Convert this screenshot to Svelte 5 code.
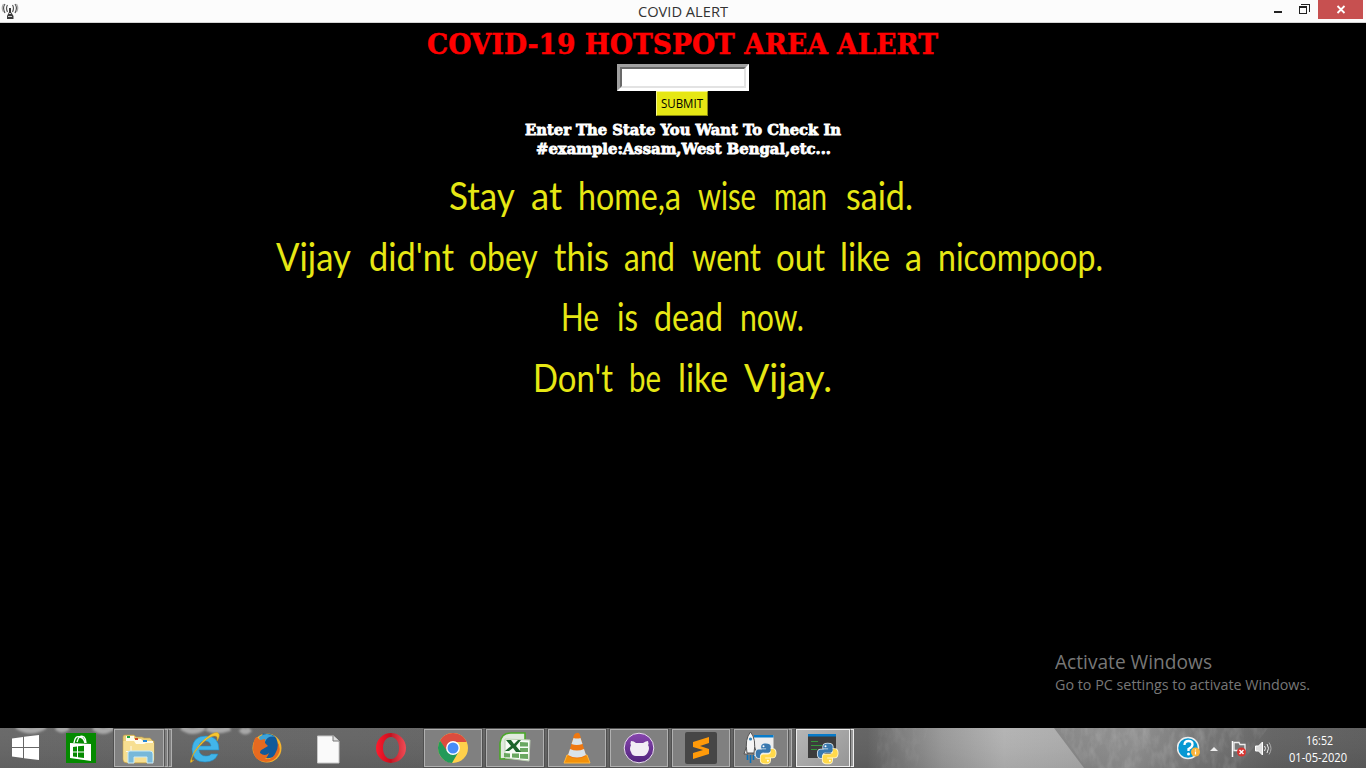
<script>
  // Each word: text, left edge, drawn width
  const verses = [
    [['Stay', 449, 65], ['at', 531, 31], ['home,a', 578, 103], ['wise', 698, 58], ['man', 774, 53], ['said.', 846, 67]],
    [['Vijay', 276, 74], ["did'nt", 369, 85], ['obey', 469, 68], ['this', 554, 55], ['and', 624, 51], ['went', 692, 69], ['out', 776, 49], ['like', 840, 50], ['a', 905, 17], ['nicompoop.', 938, 165]],
    [['He', 561, 38], ['is', 617, 21], ['dead', 654, 69], ['now.', 740, 64]],
    [["Don't", 533, 80], ['be', 629, 32], ['like', 678, 50], ['Vijay.', 744, 88]]
  ];
  const apps = [
    { id: 'store' }, { id: 'files', open: true, stack: 2 }, { id: 'ie' }, { id: 'firefox' },
    { id: 'doc' }, { id: 'opera' }, { id: 'chrome', open: true }, { id: 'excel', open: true },
    { id: 'vlc', open: true }, { id: 'github', open: true }, { id: 'sublime', open: true },
    { id: 'rocket', open: true, stack: 1 }, { id: 'idle', open: true, stack: 1, active: true }
  ];
  const snake = 'M10 0C7 0 5.500 1 5.500 3V5H10.500V6H3C1 6 0 7.500 0 10.200S1.200 14.500 3 14.500H4.800V12C4.800 10 6 9 8 9H12.500C14 9 15 8 15 6.500V3C15 1 13 0 10 0z';
</script>

{#snippet python()}
  <g transform="translate(21.700 15.500)">
    <path d={snake} fill="#3978ae" stroke="#e4ecf0" stroke-width="1.600" paint-order="stroke" />
    <path d={snake} transform="rotate(180 10 10)" fill="#ffd94b" stroke="#fff6d0" stroke-width="1.600" paint-order="stroke" />
    <path d="M8 9h4.500C14 9 15 8 15 6.500V5l-4.500 0V6H6z" fill="#3978ae" />
    <circle cx="7.800" cy="2.700" r="1" fill="#fff" /><circle cx="12.200" cy="17.300" r="1" fill="#fff" />
  </g>
{/snippet}

<div class="screen">
  <header>
    <svg class="antenna" width="18" height="18" viewBox="0 0 18 18" fill="none">
      <g stroke="#555" stroke-width="1.200"><path d="M4 3Q1 7 4 12M6.500 4Q4.500 7 6.500 11M14 3q3 4 0 9M11.500 4q2 3 0 7" /><path d="M2.500 3Q0 7 2.500 11M15.500 3q2.500 4 0 8" stroke="#aaa" /></g>
      <path d="M8 7h2v4l2.500 4v3h-6.500v-3L8 11z" fill="#3b3b3b" /><path d="M8 12.500h2M7 15.500h4" stroke="#ccc" />
    </svg>
    <svg class="caption" width="120" height="22"><text x="15" y="17" textLength="90" lengthAdjust="spacingAndGlyphs">COVID ALERT</text></svg>
    <div class="controls">
      <svg width="44" height="19" viewBox="0 0 44 19" shape-rendering="crispEdges"><path d="M0 11h8v2H0z" fill="#222" /><path d="M25.500 6.500h7v7h-7zM25 7.500h8M27 4.500h8.500V12" fill="none" stroke="#222" /></svg>
      <svg class="close" width="45" height="19"><path d="m19.500 6 7 7m0-7-7 7" stroke="#fff" stroke-width="1.800" /></svg>
    </div>
  </header>

  <main>
    <svg class="title" width="1366" height="41"><text x="427" y="31" textLength="511" lengthAdjust="spacingAndGlyphs">COVID-19 HOTSPOT AREA ALERT</text></svg>
    <div class="field"><div></div></div>
    <div class="submit"><svg width="46" height="22"><text x="2" y="16" textLength="42" lengthAdjust="spacingAndGlyphs">SUBMIT</text></svg></div>
    <svg class="hint" width="1366" height="52">
      <text x="525" y="19" textLength="316" lengthAdjust="spacingAndGlyphs">Enter The State You Want To Check In</text>
      <text x="536" y="38" textLength="295" lengthAdjust="spacingAndGlyphs">#example:Assam,West Bengal,etc...</text>
    </svg>
    <div class="verses">
      {#each verses as line}
        <svg width="1366" height="60.500"><text y="42">{#each line as [word, x, w]}<tspan {x} textLength={w} lengthAdjust="spacingAndGlyphs">{word}</tspan>{' '}{/each}</text></svg>
      {/each}
    </div>
    <svg class="activate" width="270" height="50">
      <text x="0" y="21" font-size="20" textLength="157" lengthAdjust="spacingAndGlyphs">Activate Windows</text>
      <text x="0" y="42" font-size="15" textLength="255" lengthAdjust="spacingAndGlyphs">Go to PC settings to activate Windows.</text>
    </svg>
  </main>

  <footer>
    <svg class="wall" width="1366" height="40">
      <defs>
        <linearGradient id="wa"><stop offset="0" stop-color="#666" /><stop offset=".635" stop-color="#616161" /><stop offset=".66" stop-color="#7b7b7b" /><stop offset=".69" stop-color="#989898" /><stop offset=".735" stop-color="#b2b2b2" /><stop offset=".79" stop-color="#aaa" /></linearGradient>
        <linearGradient id="wb"><stop offset="0" stop-color="#858585" /><stop offset=".25" stop-color="#8e8e8e" /><stop offset=".45" stop-color="#777" /><stop offset=".7" stop-color="#626262" /><stop offset="1" stop-color="#5c5c5c" /></linearGradient>
        <linearGradient id="shade" x2="0" y2="1"><stop offset="0" stop-color="#fff" stop-opacity=".03" /><stop offset="1" stop-color="#000" stop-opacity=".06" /></linearGradient>
        <filter id="soft" x="-5%" width="110%" y="-100%" height="300%"><feGaussianBlur stdDeviation="1" /></filter>
        <filter id="grain"><feTurbulence type="fractalNoise" baseFrequency=".12 .06" numOctaves="3" seed="4" /><feColorMatrix values="0 0 0 0 1 0 0 0 0 1 0 0 0 0 1 1.5 0 0 0 -.6" /><feComposite in2="SourceGraphic" operator="in" /></filter>
      </defs>
      <rect width="1366" height="40" fill="url(#wa)" />
      <path d="M1054 0h312v40h-282z" fill="url(#wb)" />
      <path d="M1058 0h210l-30 40h-152z" filter="url(#grain)" opacity=".22" />
      <path d="M878 0h50l-12 40h-40z" filter="url(#grain)" opacity=".12" />
      <rect width="1366" height="40" fill="url(#shade)" />
      <g fill="none" stroke="#a8a8a8" stroke-width="6" filter="url(#soft)"><path d="M17-2q14 9 28 0M57-1q4 5 11 0M94-1q9 8 19 0M120 0q4 5 14 0M182-1q10 8 22 0M207 0q9 5 23 0M241 1q4 5 9 0" /></g>
    </svg>
    <div class="start"><svg width="27" height="26" viewBox="0 0 27 26" fill="#fff"><path d="M0 3.500 11 2v10H0zM12 1.800 27 0v12H12zM0 13h11v10L0 21.500zM12 13h15v12l-15-1.800z" /></svg></div>
    <nav>
      {#each apps as app}
        <div class="slot">
          <div class="tile" class:open={app.open} class:active={app.active}></div>
          {#each Array(app.stack ?? 0) as _}<div class="edge" class:active={app.active}></div>{/each}
          <svg class="icon" width="58" height="40" viewBox="0 0 58 40">
            {#if app.id === 'store'}
              <path d="M14 5h30v30H14z" fill="#058a00" />
              <path d="m18 15 21 1v17l-21-3z" fill="#fff" /><path d="M22 15q1-8 6-6 4 1 5 6M25 14q2-8 7-5 2 2 2 6" stroke="#fff" stroke-width="1.400" fill="none" />
              <path d="m21 19 4-.5v5h-4zM26 18.300l6-.6v5.800h-6zM21 24.500h4v4.500l-4-.5zM26 24.500h6v5.500l-6-.8z" fill="#058a00" />
            {:else if app.id === 'files'}
              <path d="M9 9q0-2 2-2h9l2 2h6l2 1h6l3 3h1v18q0 4-4 4H13q-4 0-4-4z" fill="#e9ce78" stroke="#c19a40" stroke-width=".6" />
              <path d="M12 8h8v3h7l2 2h10v4H12z" fill="#fffbe9" /><path d="M13 8h3v2h-3z" fill="#20a540" /><path d="M21 10h3v2h-3z" fill="#cf4a27" /><path d="M29 12h4v2h-4z" fill="#2587d8" />
              <path d="M9.500 13H20l2 3h8l2-1h8v16q0 3-3 3H12q-2.500 0-2.500-3z" fill="#f7df91" /><path d="M17 18v11M12 23.500h10" stroke="#fff" opacity=".8" />
              <path d="M14 35V25q0-2 2-2h20q3 0 3 3v9h-6v-6H20v6z" fill="#78b8d9" stroke="#c9eaf7" />
            {:else if app.id === 'ie'}
              <path d="M43 22H23q1 6 7 6 4 0 5-2h7q-3 8-13 8-13 0-13-13Q17 8 30 8q13 0 13 14M23 18h12q-1-5-6-5t-6 5" fill="#42b5e9" stroke="#218cc4" stroke-width=".6" />
              <path d="M18 32q-6 6-2-3C21 15 38 2 42 5q3 2-1 8 1-5-2-5C32 7 18 23 16 30q-1 4 2 2" fill="#f7c62f" stroke="#d19d1c" stroke-width=".5" />
            {:else if app.id === 'firefox'}
              <circle cx="29" cy="20" r="14.500" fill="#f7b52c" /><path d="M25 5.500q12-1 14 7 4 9-1 15-5 4-13 2-7-5-5-14z" fill="#125a9a" /><path d="M21 9q8-6 16 0-7-2-10 5-3 2-5-1z" fill="#3da4d8" />
              <path d="M16 13q1-4 3-4l3 3 5-1v4l3 3-5 3q-3 1-3 4 5 4 9 0-2 5-4 6 8 1 11-7 3-6 1-11 5 8 1 14-4 7-12 7-12-1-13-12 0-6 1-9z" fill="#e66a20" />
            {:else if app.id === 'doc'}
              <path d="M17.500 8h16l5.500 5v22H17.500z" fill="#fafafa" stroke="#c8c8c8" /><path d="M33 8v5h6" fill="#ddd" stroke="#777" />
            {:else if app.id === 'opera'}
              <defs><linearGradient id="op"><stop stop-color="#ff1b2d" /><stop offset=".5" stop-color="#c70f1e" /><stop offset=".55" stop-color="#c4202c" /><stop offset="1" stop-color="#f24b55" /></linearGradient></defs>
              <path fill-rule="evenodd" d="M29 5a15 15 0 1 0 0 30 15 15 0 0 0 0-30m0 4c5 0 8 5 8 11s-3 11-8 11-8-5-8-11 3-11 8-11" fill="url(#op)" />
            {:else if app.id === 'chrome'}
              <circle cx="29" cy="20" r="15" fill="#ffd04b" /><path d="M16 12.500a15 15 0 0 1 26 0L42.500 14H29l-7 9z" fill="#dc4c3e" /><path d="M16 12.500a15 15 0 0 0 12 22.500l7-12-12 0z" fill="#229a59" /><circle cx="29" cy="20" r="6.900" fill="#fff" /><circle cx="29" cy="20" r="5.500" fill="#468cf7" />
            {:else if app.id === 'excel'}
              <path d="M14 31V15Q15 5 25 5h14v25z" fill="#e2eadf" stroke="#4aa829" stroke-width="1.600" /><path d="m19 11 25 1-1 21-24-3z" fill="#f8fcf6" stroke="#bdd0b4" />
              <path d="m34 14 8 .4v4h-8zM34 20h8v4h-8zM18 25l6 .4v4l-6-.5zM26 25.500h7v4.500l-7-.5zM34 26h8v5l-8-.6z" fill="#6aa860" /><path d="m20 12 5 0 3 4 4-4h3l-5 6 5 6h-5l-3-4-4 3h-4l6-5z" fill="#1c642b" />
            {:else if app.id === 'vlc'}
              <path d="m19 27-3 8h26l-3-8z" fill="#f2910b" stroke="#ffb53b" /><path d="M29 5q2-1 3 2l6 21q-9 5-18 0l6-21q1-2 3-2" fill="#ef7811" /><path d="m25.500 10-2 6q5 2 11 0l-2-6q-3 1-7 0M22 21l-2 6q9 5 18 0l-2-6q-7 3-14 0" fill="#d9e3e9" />
            {:else if app.id === 'github'}
              <defs><linearGradient id="gh" x2="0" y2="1"><stop stop-color="#8745ae" /><stop offset="1" stop-color="#51247d" /></linearGradient></defs><circle cx="29" cy="20" r="14.800" fill="url(#gh)" stroke="#e8dded" />
              <path d="M21 13q3 0 5 2h7q3-2 5-2 1 3 0 4 2 3 0 7-2 4-5 4h-7q-4 0-5-4-2-3 0-7-1-1 0-4" fill="#f2edf5" />
            {:else if app.id === 'sublime'}
              <rect x="13" y="4" width="32" height="32" rx="2" fill="#464646" /><path d="m21 14 16-5v6l-9 3 9 3v5l-16 5v-6l10-3-10-3z" fill="#ff9a09" />
            {:else if app.id === 'rocket'}
              <path d="M20 7h19.500v21H20z" fill="#eee" /><path d="M20 7h19.500v2.500H20z" fill="#087bc9" />
              <path d="m13 17-3 9h4zM20 17l3 9h-4z" fill="#eee" stroke="#555" /><path d="M16.500 4q6 7 3.500 21h-7Q10.500 11 16.500 4" fill="#f5f5f5" stroke="#555" /><circle cx="16.500" cy="11" r="1.600" fill="#3282b8" /><path d="M13.500 27v5M16.500 27v8M19.500 27v5" stroke="#0872bd" stroke-width="1.600" />
              {@render python()}
            {:else}
              <path d="M12 6h28v24H12z" fill="#3c3c3c" /><path d="M12 6h28v2.500H12z" fill="#087bc9" /><path d="M15 13.500h7M15 17.500h11M15 21.500h6" stroke="#35973b" />
              {@render python()}
            {/if}
          </svg>
        </div>
      {/each}
    </nav>
    <div class="tray">
      <svg width="100" height="40">
        <circle cx="11" cy="20" r="10.500" fill="#0798d3" stroke="#eee" stroke-width="1.500" /><path d="M7.500 17q0-4 4-4t4 3.500q0 2.500-4 4.500v2" fill="none" stroke="#fff" stroke-width="2.300" /><circle cx="11.500" cy="26" r="1.500" fill="#fff" /><circle cx="18.500" cy="24" r="4.500" fill="#f9b43b" /><path d="M18.500 21.500v1M18.500 23.500v3" stroke="#fff" stroke-width="1.200" />
        <path d="m33 23 4-4 4 4z" fill="#eee" />
        <path d="M55.500 13v16" stroke="#fff" stroke-width="1.500" /><path d="M57 14.500h5l1 2h5v8h-6l-1-2h-4z" fill="#777" stroke="#eee" stroke-width="1.300" /><circle cx="64.500" cy="24" r="4.500" fill="#d73430" /><path d="m62.500 22 4 4m0-4-4 4" stroke="#fff" stroke-width="1.400" />
        <path d="M78.500 18h3l4-4v13l-4-4h-3z" fill="#ddd" stroke="#fff" /><path d="M87.500 18q2 2 0 5M90 16q3 4 0 9" fill="none" stroke="#eee" /><path d="M92 14.500q4 6 0 12" fill="none" stroke="#aaa" />
      </svg>
      <svg class="clock" width="89" height="40"><text x="29" y="17" textLength="27" lengthAdjust="spacingAndGlyphs">16:52</text><text x="12" y="33.500" textLength="58" lengthAdjust="spacingAndGlyphs">01-05-2020</text></svg>
    </div>
  </footer>
</div>

<style>
  :global(body) { margin: 0; background: #000; overflow: hidden; }
  svg { display: block; flex: none; }
  .screen { width: 1366px; height: 768px; display: flex; flex-direction: column; background: #000; font-family: "Open Sans", "Noto Sans", sans-serif; overflow: hidden; }
  header { height: 22px; flex: none; background: #fcfcfc; border-bottom: 1px solid #d4d4d4; display: grid; grid-template-columns: 623px 120px 1fr; }
  .antenna { margin: 1px 0 0 1px; }
  .caption { font-size: 15px; fill: #333; }
  .controls { display: flex; justify-content: flex-end; padding-right: 3px; }
  .close { background: #c75050; }
  main { height: 705px; flex: none; display: flex; flex-direction: column; align-items: center; }
  .title { font: bold 28px "DejaVu Serif", serif; fill: #f00; stroke: #f00; stroke-width: .5px; }
  .field { width: 126px; height: 21px; flex: none; border: 3px solid; border-color: #a0a0a0 #fff #fff #a0a0a0; }
  .field div { height: 17px; border: 2px solid; border-color: #696969 #e3e3e3 #e3e3e3 #696969; background: #fff; }
  .submit { width: 50px; height: 23px; margin-right: 2px; flex: none; display: flex; justify-content: center; background: #e6e714; border: 1px solid; border-color: #f7f78e #8a8a0c #8a8a0c #f7f78e; font-size: 12px; }
  .hint { font: bold 15px "DejaVu Serif", serif; fill: #fff; stroke: #fff; stroke-width: .8px; }
  .verses { display: flex; flex-direction: column; font: 39px Lato, sans-serif; fill: #e6e714; }
  .activate { align-self: flex-end; margin-top: auto; margin-right: 41px; margin-bottom: 30px; fill: #777; }
  footer { position: relative; height: 40px; flex: none; display: flex; }
  .wall { position: absolute; inset: 0; z-index: 0; }
  .start { width: 52px; display: flex; align-items: center; box-sizing: border-box; padding-left: 12px; z-index: 1; }
  nav { display: flex; gap: 4px; z-index: 1; }
  .slot { width: 58px; height: 40px; position: relative; display: flex; box-sizing: border-box; padding: 1px 0; }
  .tile { flex: 1; box-sizing: border-box; }
  .open { border: 1px solid #b0b0b0; background: #808080; box-shadow: 0 0 0 1px #505050; }
  .edge { width: 4px; box-sizing: border-box; border: 1px solid #b0b0b0; border-left-color: #555; background: #808080; }
  .tile.active { border-color: #eee; background: linear-gradient(135deg, #b6b6b6, #969696); }
  .edge.active { border-color: #eee; background: #999; border-left-color: #555; }
  .icon { position: absolute; left: 0; top: 0; }
  .tray { display: flex; margin-left: auto; z-index: 1; }
  .clock { font-size: 12px; fill: #fff; }
</style>
